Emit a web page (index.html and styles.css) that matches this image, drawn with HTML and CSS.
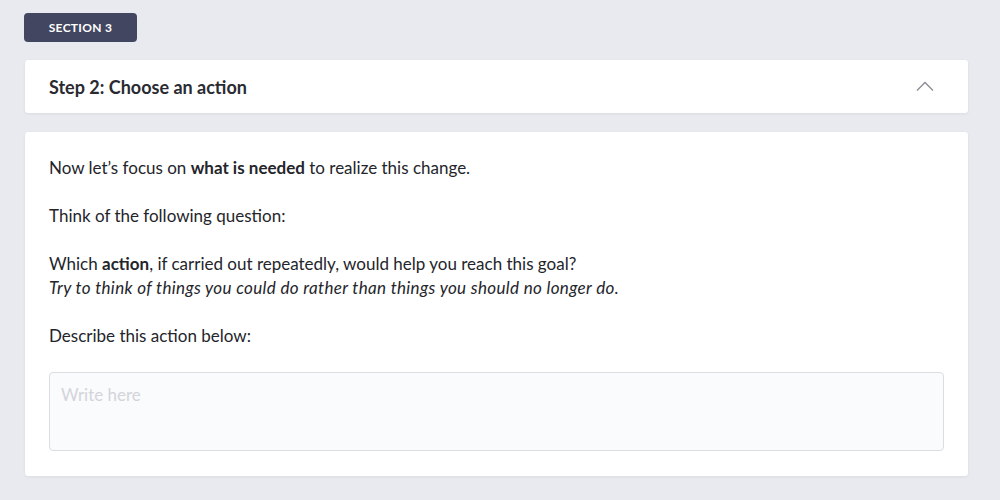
FILE: index.html
```html
<!DOCTYPE html>
<html>
<head>
<meta charset="utf-8">
<link rel="stylesheet" href="styles.css">
</head>
<body>
<div class="page">
  <div class="badge">SECTION 3</div>
  <div class="card header">
    <h2 class="title">Step 2: Choose an action</h2>
    <svg class="chevron" width="18" height="10" viewBox="0 0 18 10"><path d="M1 9.5 L9 1.5 L17 9.5" fill="none" stroke="#8a8c94" stroke-width="1.3"/></svg>
  </div>
  <div class="card body">
    <p>Now let’s focus on <b>what is needed</b> to realize this change.</p>
    <p>Think of the following question:</p>
    <p>Which <b>action</b>, if carried out repeatedly, would help you reach this goal?<br><i class="hint">Try to think of things you could do rather than things you should no longer do.</i></p>
    <p>Describe this action below:</p>
    <textarea class="input" placeholder="Write here"></textarea>
  </div>
</div>
</body>
</html>
```
FILE: styles.css
```css
html, body { margin: 0; padding: 0; }
body {
  background: #e9eaef;
  font-family: "Lato", "Noto Sans", sans-serif;
  color: #24252b;
  width: 1000px;
  height: 500px;
  overflow: hidden;
}
.page {
  padding: 13px 32px 0 24px;
  display: flex;
  flex-direction: column;
  align-items: stretch;
}
.badge {
  align-self: flex-start;
  width: 113px;
  height: 29px;
  box-sizing: border-box;
  background: #434660;
  color: #fff;
  border-radius: 4px;
  font-size: 12px;
  font-weight: 700;
  display: flex;
  align-items: center;
  justify-content: center;
  letter-spacing: 0.3px;
}
.card {
  background: #fff;
  border-radius: 3px;
  margin-left: 1px;
  box-shadow: 0 1px 3px rgba(40, 45, 80, 0.08);
}
.header {
  margin-top: 18px;
  height: 53px;
  display: flex;
  align-items: center;
  justify-content: space-between;
  padding: 0 34px 0 24px;
}
.title {
  margin: 0;
  font-size: 18px;
  font-weight: 700;
  color: #2a2b31;
}
.chevron { display: block; margin-top: -1px; }
.body {
  margin-top: 19px;
  padding: 24px 24px 25px 24px;
  font-size: 17px;
  line-height: 24px;
}
.body p { margin: 0 0 24px 0; }
.hint { letter-spacing: 0.35px; }
.input {
  display: block;
  width: 100%;
  box-sizing: border-box;
  height: 79px;
  margin: 0;
  background: #fafbfd;
  border: 1px solid #dcdde2;
  border-radius: 4px;
  padding: 10px 11px;
  font-family: inherit;
  font-size: 17px;
  line-height: 24px;
  resize: none;
  outline: none;
}
.input::placeholder { color: #d3d4da; }
```
